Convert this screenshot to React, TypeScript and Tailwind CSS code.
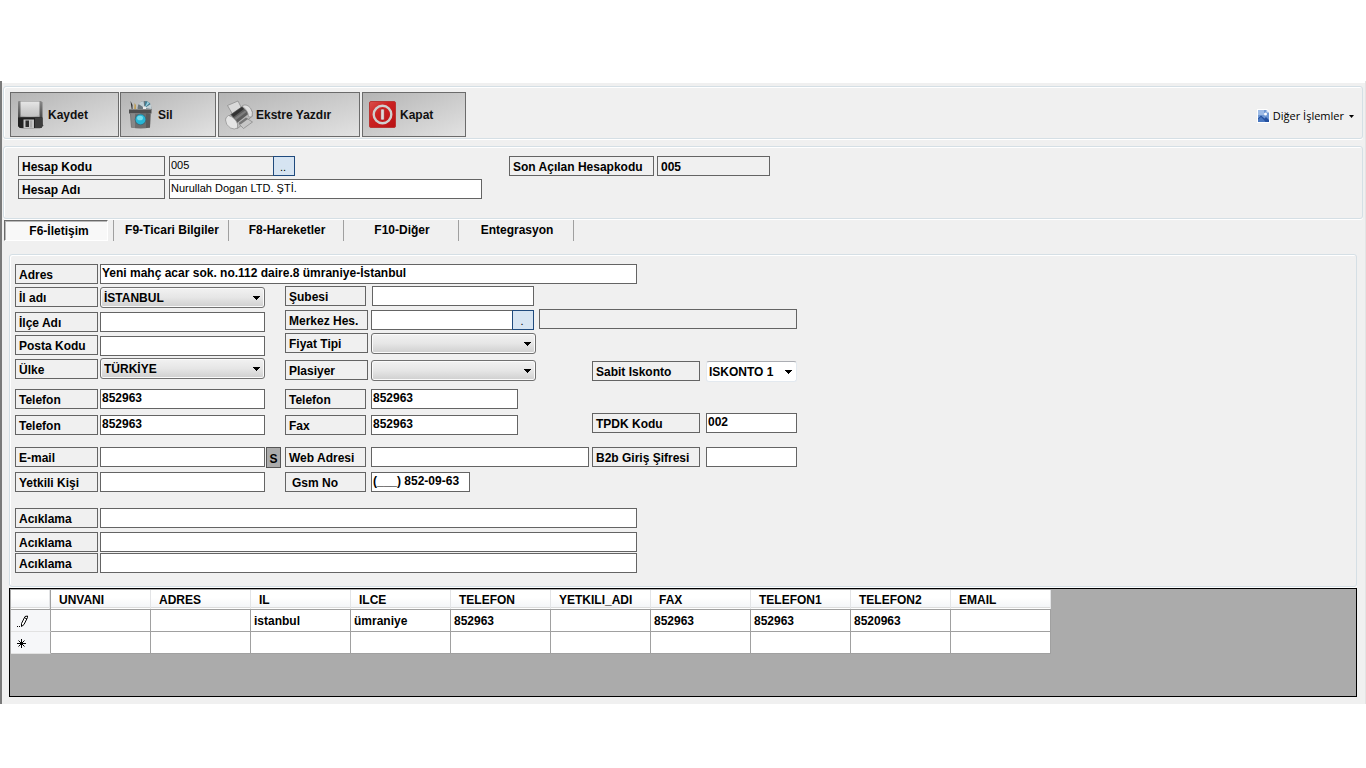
import type { ReactNode } from "react";

const LABEL =
  "flex h-5 shrink-0 items-center border border-[#646464] bg-[#f0f0f0] pt-0.5 text-[12px] leading-4 font-bold whitespace-nowrap";
const INPUT =
  "block h-5 min-w-0 shrink-0 border border-[#646464] bg-white px-px pb-0.5 text-[12px] leading-4 font-bold outline-none";

type FieldProps = { id: string; width: string; value?: string; className?: string };

function Input({ id, width, value = "", className = "" }: FieldProps) {
  return <input id={id} name={id} type="text" defaultValue={value} className={`${INPUT} ${width} ${className}`} />;
}

function Label({
  id,
  width,
  indent = "pl-[3px]",
  children,
  className = "",
}: {
  id: string;
  width: string;
  indent?: string;
  children: ReactNode;
  className?: string;
}) {
  return (
    <label htmlFor={id} className={`${LABEL} ${width} ${indent} ${className}`}>
      {children}
    </label>
  );
}

function Arrow({ className = "" }: { className?: string }) {
  return (
    <svg viewBox="0 0 7 4" aria-hidden="true" shapeRendering="crispEdges" className={`pointer-events-none h-1 w-[7px] ${className}`}>
      <path d="M0 0h7v1H6v1H5v1H4v1H3V3H2V2H1V1H0z" fill="#000" />
    </svg>
  );
}

function Select({ id, width, value, flat = false }: { id: string; width: string; value: string; flat?: boolean }) {
  const look = flat
    ? "border-[#e3e9ef] border-t-[#abadb3] bg-white pl-0.5"
    : "border-[#707070] bg-linear-to-b from-[#f2f2f2] from-0% via-[#e6e6e6] via-50% to-[#cfcfcf] to-100% pl-[3px] shadow-[inset_0_0_0_1px_#fafafa]";
  return (
    <div className={`relative h-[21px] shrink-0 ${width}`}>
      <select
        id={id}
        name={id}
        defaultValue={value}
        className={`block h-full w-full appearance-none rounded-[3px] border text-[12px] leading-4 font-bold outline-none ${look}`}
      >
        <option value={value}>{value}</option>
      </select>
      <Arrow className="absolute top-[9px] right-[5px]" />
    </div>
  );
}

function Frame({ children, className = "" }: { children: ReactNode; className?: string }) {
  return (
    <div className={`rounded-[3px] border border-[#d5dfe5] shadow-[inset_1px_1px_0_#fff,0_1px_0_#fff] ${className}`}>
      {children}
    </div>
  );
}

function ToolButton({ width, icon, children }: { width: string; icon: ReactNode; children: ReactNode }) {
  return (
    <button
      type="button"
      className={`flex h-[45px] items-center gap-[3px] border border-[#6b6b6b] bg-linear-to-br from-[#b4b4b4] to-[#e2e2e2] pl-1.5 text-[12px] font-bold text-[#111] ${width}`}
    >
      {icon}
      <span>{children}</span>
    </button>
  );
}

function SaveIcon() {
  return (
    <svg viewBox="0 0 28 30" className="h-[30px] w-7" aria-hidden="true">
      <defs>
        <linearGradient id="disk" x1="0" y1="0" x2="0" y2="1">
          <stop offset="0" stopColor="#8a8a8a" />
          <stop offset="0.5" stopColor="#565656" />
          <stop offset="1" stopColor="#1c1c1c" />
        </linearGradient>
        <linearGradient id="diskLabel" x1="0" y1="0" x2="0" y2="1">
          <stop offset="0" stopColor="#e6e6e6" />
          <stop offset="0.5" stopColor="#d2d2d2" />
          <stop offset="1" stopColor="#c2c2c2" />
        </linearGradient>
      </defs>
      <path d="M3 28.500h20l4-3-3-2z" fill="#6e6e6e" opacity=".7" />
      <path d="M1.500 1H24l1.500 1.500V26L24 28H3l-2-2V1.500z" fill="url(#disk)" />
      <path d="M3.500 1.500h19V16l-1 1h-17l-1-1z" fill="url(#diskLabel)" />
      <path d="M3.500 15.500q9 2 19 0V17h-19z" fill="#a5a5a5" />
      <path d="M1 17.500h24.500V26L24 28H3l-2-2z" fill="#202020" />
      <path d="M18 18h7v9l-1 1h-6z" fill="#3d3d3d" />
      <path d="M6.500 19.500h10.500V28H6.500z" fill="#c4c4c4" />
      <path d="M8.500 20.500h3.500V27H8.500z" fill="#2b2b2b" />
      <path d="M13.500 20.500h1v7h-1z" fill="#8f8f8f" />
    </svg>
  );
}

function BinIcon() {
  return (
    <svg viewBox="0 0 28 30" className="h-[30px] w-7" aria-hidden="true">
      <circle cx="17.500" cy="8" r="7" fill="#6a767d" />
      <path d="M17.500 8l-6-4a7 7 0 0 1 5-3zM17.500 8l6-4a7 7 0 0 1 1 5z" fill="#c3d0d5" />
      <path d="M17.500 8l1-7a7 7 0 0 1 5 3z" fill="#3f7f96" />
      <path d="M17.500 8l3-6.300 2 1.300z" fill="#9fd0de" />
      <circle cx="17.500" cy="8" r="1.700" fill="#eee" />
      <path d="M3.500 1l2 4v6H5z" fill="#2b2b2b" />
      <path d="M7.500 3l1.500 2v6H7z" fill="#bfa05a" />
      <path d="M2 9h22.500v4.500H2z" fill="#4e4e4e" />
      <path d="M2 9h22.500v1H2z" fill="#858585" />
      <path d="M3 13.500h20.500l-.5 14q-9 2-19 0z" fill="#6e6e6e" />
      <path d="M4 13.500h4V28l-3.500-.500z" fill="#878787" />
      <path d="M19 13.500h4.500l-.5 14-4 .5z" fill="#5a5a5a" />
      <circle cx="13.500" cy="19.500" r="5.800" fill="#456773" />
      <circle cx="13.500" cy="19.500" r="4.900" fill="#27b5d4" />
      <ellipse cx="13" cy="18" rx="3" ry="2.300" fill="#74dcec" />
    </svg>
  );
}

function PrinterIcon() {
  return (
    <svg viewBox="0 0 28 30" className="h-[30px] w-7" aria-hidden="true">
      <path d="M2.500 5.500L13 1l4 8-9 6z" fill="#d9d9d9" stroke="#858585" strokeWidth=".7" />
      <path d="M1 18L18 6q5-1 9 5l.5 5-15 12.500-7-1.500-4-5z" fill="#b9b9b9" stroke="#858585" strokeWidth=".7" />
      <path d="M5.500 14.500L17 6.500l7 7L12 23z" fill="#5d5d5d" />
      <path d="M6.500 14.500L17 7l2 2-10.500 8z" fill="#333" />
      <path d="M9.500 18L20 10.500l1.500 1.500L11 20z" fill="#7d7d7d" />
      <path d="M.5 20q0-3 3-4.500 7 2 9 8.500v4q-3 2-7 0-5-3-5-8z" fill="#e4e4e4" stroke="#8d8d8d" strokeWidth=".7" />
      <path d="M17 6q4-3 8.500 2 3 5 1.500 8.500-2 1-3.500 0-.5-6.500-6.500-10.500z" fill="#e0e0e0" stroke="#8d8d8d" strokeWidth=".7" />
      <path d="M14 24l8-5.500 5.500 3.500-9 6.500z" fill="#c6c6c6" stroke="#858585" strokeWidth=".7" />
      <path d="M13.500 23l7.500-5.500 2 1.500-7.500 5.500z" fill="#777" />
    </svg>
  );
}

function PowerIcon() {
  return (
    <svg viewBox="0 0 28 30" className="h-[30px] w-7" aria-hidden="true">
      <defs>
        <linearGradient id="power" x1="0" y1="0" x2="1" y2="1">
          <stop offset="0" stopColor="#d9504c" />
          <stop offset="0.4" stopColor="#cc2222" />
          <stop offset="1" stopColor="#b81114" />
        </linearGradient>
      </defs>
      <rect x=".5" y="1.500" width="26" height="26" rx="1.500" fill="url(#power)" stroke="#b93634" />
      <circle cx="13.500" cy="14.500" r="8.800" fill="none" stroke="#cfcfcf" strokeWidth="2.400" />
      <rect x="11.700" y="9" width="3.600" height="11" rx="1" fill="#dcdcdc" stroke="#a01315" strokeWidth=".6" />
    </svg>
  );
}

function PictureIcon() {
  return (
    <svg viewBox="0 0 13 14" className="h-3.5 w-[13px]" aria-hidden="true">
      <path d="M0 0h10l3 3v11H0z" fill="#fff" />
      <path d="M1 1h8.500L12 3.500V13H1z" fill="#6f98d4" />
      <path d="M1 1h6v5H1z" fill="#9dbbe6" />
      <path d="M9.500 1v2.500H12z" fill="#dfe9f7" />
      <path d="M1 9.500L4 6.500l3.500 3 1.500-1.500 3 3V13H1z" fill="#24509f" />
      <path d="M1 10.500L4 8l3 3 1.500 2H1z" fill="#4a78c0" />
      <circle cx="8.500" cy="5" r="1.500" fill="#fff" />
    </svg>
  );
}

function Lookup({ label, children }: { label: string; children: ReactNode }) {
  return (
    <button
      type="button"
      aria-label={label}
      className="-ml-px flex h-5 w-[22px] shrink-0 items-center justify-center border border-[#1f4a7d] bg-[#d6e4f2] pt-0.5 pr-0.5 text-[11px] leading-3"
    >
      {children}
    </button>
  );
}

const TABS = ["F9-Ticari Bilgiler", "F8-Hareketler", "F10-Diğer", "Entegrasyon"];
const COLUMNS = ["UNVANI", "ADRES", "IL", "ILCE", "TELEFON", "YETKILI_ADI", "FAX", "TELEFON1", "TELEFON2", "EMAIL"];
const ROW = ["", "", "istanbul", "ümraniye", "852963", "", "852963", "852963", "8520963", ""];

const HEAD =
  "h-5 border-b border-[#a0a0a0] bg-linear-to-b from-white from-40% to-[#f1f3f6] p-0 shadow-[inset_-1px_0_0_#e3e4e6,inset_0_-1px_0_#fff,inset_0_-2px_0_#dcdcdc]";

function RecordGrid() {
  return (
    <div className="h-[109px] overflow-hidden border border-black bg-[#ababab] p-px">
      <table className="w-[1040px] table-fixed border-separate border-spacing-0 text-left text-[12px] leading-4 font-bold">
        <colgroup>
          <col className="w-10" />
        </colgroup>
        <thead>
          <tr>
            <td className={`border-r ${HEAD}`} />
            {COLUMNS.map((name) => (
              <th key={name} scope="col" className={HEAD}>
                <span className="block pl-2">{name}</span>
              </th>
            ))}
          </tr>
        </thead>
        <tbody>
          <tr>
            <td className="h-[22px] border-r border-b border-r-[#a0a0a0] border-b-[#e2e2e2] bg-[#f6f7f9] p-0 pl-1.5">
              <svg viewBox="0 0 12 12" className="h-3 w-3" aria-label="Düzenleniyor">
                <path d="M0 11h1v1H0zM2 11h1v1H2z" fill="#000" />
                <path d="M4.500 11.500v-3l3.500-7 2.500-.500v1.500L7 9.500z" fill="#fff" stroke="#000" />
                <path d="M8 3l2 1" stroke="#000" />
              </svg>
            </td>
            {ROW.map((cell, i) => (
              <td key={COLUMNS[i]} className="h-[22px] border-r border-b border-[#a0a0a0] bg-white p-0 pl-[3px]">
                {cell}
              </td>
            ))}
          </tr>
          <tr>
            <td className="h-[22px] border-r border-b border-r-[#a0a0a0] border-b-[#e2e2e2] bg-[#f6f7f9] p-0 pt-0.5 pl-1.5">
              <svg viewBox="0 0 9 9" className="h-[9px] w-[9px]" aria-label="Yeni kayıt">
                <path d="M4.500 0v9M0 4.500h9M1.500 1.500l6 6M7.500 1.500l-6 6" stroke="#000" />
              </svg>
            </td>
            {COLUMNS.map((name) => (
              <td key={name} className="h-[22px] border-r border-b border-[#a0a0a0] bg-white p-0" />
            ))}
          </tr>
        </tbody>
      </table>
    </div>
  );
}

function AddressColumn() {
  return (
    <div className="flex w-[270px] shrink-0 flex-col">
      <div className="flex gap-0.5">
        <Label id="il" width="w-[83px]">İl adı</Label>
        <Select id="il" width="w-[165px]" value="İSTANBUL" />
      </div>
      <div className="mt-1 flex gap-0.5">
        <Label id="ilce" width="w-[83px]">İlçe Adı</Label>
        <Input id="ilce" width="w-[165px]" />
      </div>
      <div className="mt-[3px] flex h-[21px] gap-0.5">
        <Label id="posta" width="w-[83px]">Posta Kodu</Label>
        <Input id="posta" width="w-[165px]" className="self-end" />
      </div>
      <div className="mt-0.5 flex items-end gap-0.5">
        <Label id="ulke" width="w-[83px]">Ülke</Label>
        <Select id="ulke" width="w-[165px]" value="TÜRKİYE" />
      </div>
      <div className="mt-2.5 flex gap-0.5">
        <Label id="tel1" width="w-[83px]">Telefon</Label>
        <Input id="tel1" width="w-[165px]" value="852963" />
      </div>
      <div className="mt-1.5 flex gap-0.5">
        <Label id="tel2" width="w-[83px]">Telefon</Label>
        <Input id="tel2" width="w-[165px]" value="852963" />
      </div>
      <div className="mt-3 flex h-[21px] gap-0.5">
        <Label id="email" width="w-[83px]">E-mail</Label>
        <Input id="email" width="w-[165px]" />
        <button
          type="button"
          className="-ml-px flex h-[21px] w-[15px] items-center justify-center border border-[#555] bg-[#ababab] pt-0.5 text-[12px] leading-4 font-bold"
        >
          S
        </button>
      </div>
      <div className="mt-1 flex gap-0.5">
        <Label id="yetkili" width="w-[83px]">Yetkili Kişi</Label>
        <Input id="yetkili" width="w-[165px]" />
      </div>
    </div>
  );
}

function ContactColumn() {
  return (
    <div className="-mt-px flex w-[512px] shrink-0 flex-col">
      <div className="flex gap-1.5">
        <Label id="sube" width="w-[81px]">Şubesi</Label>
        <Input id="sube" width="w-[162px]" />
      </div>
      <div className="mt-[3px] flex h-[21px] items-end">
        <Label id="merkez" width="w-[83px]">Merkez Hes.</Label>
        <Input id="merkez" width="w-[142px]" className="ml-[3px]" />
        <Lookup label="Merkez hesap seç">.</Lookup>
        <input
          type="text"
          readOnly
          aria-label="Merkez hesap adı"
          className="ml-[5px] block h-5 w-[258px] self-start border border-[#646464] bg-[#f0f0f0] outline-none"
        />
      </div>
      <div className="mt-[3px] flex gap-[3px]">
        <Label id="fiyat" width="w-[83px]">Fiyat Tipi</Label>
        <Select id="fiyat" width="w-[165px]" value="" />
      </div>
      <div className="mt-1.5 flex">
        <Label id="plasiyer" width="w-[83px]" className="mr-[3px]">Plasiyer</Label>
        <Select id="plasiyer" width="w-[165px]" value="" />
        <div className="mt-px ml-auto flex gap-1.5">
          <Label id="iskonto" width="w-[108px]">Sabit Iskonto</Label>
          <Select id="iskonto" width="w-[91px]" value="ISKONTO 1" flat />
        </div>
      </div>
      <div className="mt-[7px] flex gap-[5px]">
        <Label id="tel3" width="w-[81px]">Telefon</Label>
        <Input id="tel3" width="w-[147px]" value="852963" />
      </div>
      <div className="mt-1 flex h-[22px] items-end">
        <Label id="fax" width="w-[81px]" className="mr-[5px]">Fax</Label>
        <Input id="fax" width="w-[147px]" value="852963" />
        <div className="ml-auto flex gap-1.5 self-start">
          <Label id="tpdk" width="w-[108px]">TPDK Kodu</Label>
          <Input id="tpdk" width="w-[91px]" value="002" />
        </div>
      </div>
      <div className="mt-3 flex">
        <Label id="web" width="w-[81px]" className="mr-[5px]">Web Adresi</Label>
        <Input id="web" width="w-[218px]" />
        <div className="ml-auto flex gap-1.5">
          <Label id="b2b" width="w-[108px]">B2b Giriş Şifresi</Label>
          <Input id="b2b" width="w-[91px]" />
        </div>
      </div>
      <div className="mt-[5px] flex gap-[5px]">
        <Label id="gsm" width="w-[81px]" indent="pl-1.5">Gsm No</Label>
        <Input id="gsm" width="w-[99px]" value="(___) 852-09-63" />
      </div>
    </div>
  );
}

export default function App() {
  return (
    <div className="min-h-screen bg-white pt-[81px] font-['Liberation_Sans',Arial,sans-serif] text-black">
      <div className="border-r border-l-2 border-r-[#e4e4e4] border-l-[#7a7a7a] bg-[#f0f0f0] pb-[7px]">
        <div className="h-0.5 bg-white" />
        <main className="pt-[3px] pr-0.5 pl-px">
          <Frame className="flex h-[53px] items-start gap-px px-1.5 pt-[5px]">
            <ToolButton width="w-[109px]" icon={<SaveIcon />}>Kaydet</ToolButton>
            <div className="flex gap-0.5">
              <ToolButton width="w-24" icon={<BinIcon />}>Sil</ToolButton>
              <ToolButton width="w-[142px]" icon={<PrinterIcon />}>Ekstre Yazdır</ToolButton>
              <ToolButton width="w-[104px]" icon={<PowerIcon />}>Kapat</ToolButton>
            </div>
            <button
              type="button"
              className="mr-0.5 ml-auto flex h-12 items-center gap-[3px] font-['Open_Sans','Noto_Sans',sans-serif] text-[11px] leading-4"
            >
              <PictureIcon />
              <span>Diğer İşlemler</span>
              <svg viewBox="0 0 5 3" className="ml-0.5 h-[3px] w-[5px]" aria-hidden="true">
                <path d="M0 0h5L2.500 3z" fill="#000" />
              </svg>
            </button>
          </Frame>

          <Frame className="mt-[7px] flex h-[73px] gap-[27px] pt-[9px] pl-3.5">
            <div className="flex flex-col gap-[3px]">
              <div className="flex gap-1">
                <Label id="kod" width="w-[147px]">Hesap Kodu</Label>
                <div className="flex">
                  <input
                    id="kod"
                    type="text"
                    defaultValue="005"
                    className="block h-5 w-[105px] border border-[#646464] bg-[#f0f0f0] px-px pb-0.5 text-[11px] leading-4 outline-none"
                  />
                  <Lookup label="Hesap seç">..</Lookup>
                </div>
              </div>
              <div className="flex gap-1">
                <Label id="ad" width="w-[147px]">Hesap Adı</Label>
                <input
                  id="ad"
                  type="text"
                  defaultValue="Nurullah Dogan LTD. ŞTİ."
                  className="block h-5 w-[313px] border border-[#646464] bg-white px-px pb-0.5 text-[11px] leading-4 outline-none"
                />
              </div>
            </div>
            <div className="flex gap-[3px]">
              <Label id="son" width="w-[145px]">Son Açılan Hesapkodu</Label>
              <input
                id="son"
                type="text"
                readOnly
                value="005"
                className="block h-5 w-[113px] border border-[#646464] bg-[#f0f0f0] pt-0.5 pl-[3px] text-[12px] leading-4 font-bold outline-none"
              />
            </div>
          </Frame>

          <nav className="mt-px flex h-[21px] pl-px text-[12px] leading-4 font-bold">
            <div className="flex w-[110px] border-r border-[#a0a0a0]">
              <button
                type="button"
                aria-current="page"
                className="h-[21px] w-[104px] border border-t-[#696969] border-r-white border-b-white border-l-[#696969] bg-[#f8f8f8] pl-1.5 shadow-[inset_1px_1px_0_#b8b8b8]"
              >
                F6-İletişim
              </button>
            </div>
            {TABS.map((tab) => (
              <button key={tab} type="button" className="w-[115px] border-r border-[#a0a0a0] pb-px pl-0.5">
                {tab}
              </button>
            ))}
          </nav>

          <div className="mt-[13px] mr-1.5 ml-1.5">
            <Frame className="h-[333px] pt-[9px] pl-[5px]">
              <div className="flex gap-0.5">
                <Label id="adres" width="w-[83px]">Adres</Label>
                <Input id="adres" width="w-[537px]" value="Yeni mahç acar sok. no.112 daire.8 ümraniye-İstanbul" />
              </div>
              <div className="mt-[3px] flex">
                <AddressColumn />
                <ContactColumn />
              </div>
              <div className="mt-4 flex gap-0.5">
                <Label id="not1" width="w-[83px]">Acıklama</Label>
                <Input id="not1" width="w-[537px]" />
              </div>
              <div className="mt-1 flex gap-0.5">
                <Label id="not2" width="w-[83px]">Acıklama</Label>
                <Input id="not2" width="w-[537px]" />
              </div>
              <div className="mt-px flex gap-0.5">
                <Label id="not3" width="w-[83px]">Acıklama</Label>
                <Input id="not3" width="w-[537px]" />
              </div>
            </Frame>
            <div className="mt-px">
              <RecordGrid />
            </div>
          </div>
        </main>
      </div>
    </div>
  );
}
